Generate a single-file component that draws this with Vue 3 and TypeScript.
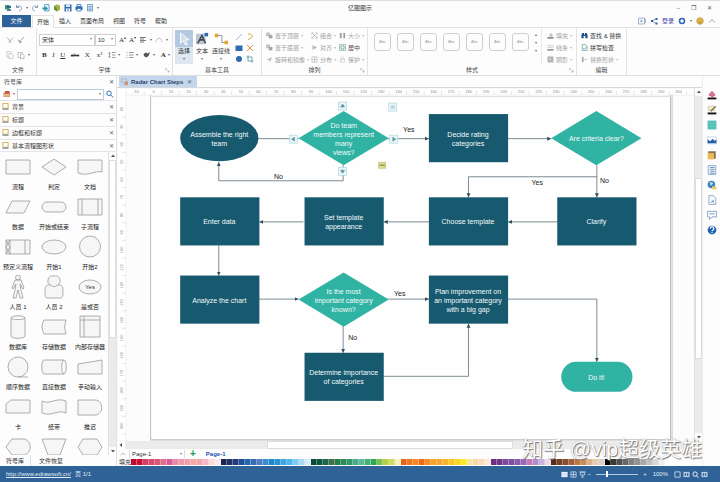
<script setup lang="ts">
import { h, ref } from 'vue'

type Part = [d: string, fill?: string, stroke?: string, width?: number]

const blue = '#2d6cb0'
const navy = '#1f4e86'
const grey = '#b4b4b4'
const white = '#fff'

const icons: Record<string, Part[]> = {
  logo: [['M2 2h9v9H2z', '#3f9b4f'], ['M5 4h9v4H5z', '#336699'], ['M6 10h8v4H6z', '#5b7ca8']],
  undo: [['M3 2v5h5M3 7c3-4 10-4 10 2 0 3-3 4-5 5', 'none', '#8296ae', 2]],
  redo: [['M13 2v5H8M13 7C10 3 3 3 3 9c0 3 3 4 5 5', 'none', '#8fa6b4', 2]],
  newdoc: [['M5 1h9v13H5z', '#e8f4fb', '#3a9bbd', 1.5], ['M1 7h6V4l5 5-5 5v-3H1z', '#2a97a6']],
  ball: [['M8 1l6 3v7l-6 4-6-4V4z', '#4f9a3a'], ['M8 1l6 3-6 4-6-4z', '#a2b94b'], ['M8 8l6-3v5l-6 4z', '#d5a43b']],
  save: [['M1 1h14v14H1z', blue], ['M4 1h8v5H4z', '#dceaf7'], ['M4 9h8v6H4z', '#fff'], ['M6 11h4v2H6z', blue]],
  print: [['M4 1h8v4H4z', '#fff', blue, 1.5], ['M1 5h14v7H1z', blue], ['M4 9h8v5H4z', '#fff', blue, 1.5]],
  preview: [['M3 1h10v13H3z', '#e5eef8', '#5686b6', 1.5], ['M5 5h6M5 8h6M5 11h6', 'none', '#5686b6', 1.5]],
  cut: [['M2 3l7 8M14 3L7 11M5 12h6', 'none', grey, 2]],
  brush: [['M14 2L8 9M3 8l6 4-3 2z', '#a6a6a6', '#a6a6a6', 2]],
  copy: [['M2 1h6l3 3v8H2z', '#fff', grey, 1.3], ['M6 5h5l3 3v7H6z', '#fff', grey, 1.3]],
  paste: [['M2 3h9v10H2z', '#fff', '#aaa', 1.3], ['M7 6h4l3 3v6H7z', '#fff', '#999', 1.3]],
  align: [['M2 3h12M2 6h8M2 9h12M2 12h8', 'none', '#555', 1.5]],
  arc: [['M2 12C3 2 13 2 14 12', 'none', grey, 1.5]],
  spacing: [['M3 3v10M1 5l2-2 2 2M1 11l2 2 2-2M8 3h7M8 8h7M8 13h7', 'none', '#777', 1.4]],
  bullets: [['M1 3h2M1 8h2M1 13h2M6 3h9M6 8h9M6 13h9', 'none', '#777', 1.5]],
  marker: [['M1 6l5-3 3 2 5-3-3 8-5 3-4-3z', '#555']],
  pointer: [['M4 1v12l3-3 3 5 2-1-3-5h5z', '#d5dde8', '#fff', 1]],
  text: [['M1 2h11v12H1z', '#bfc6cf'], ['M3 13L8 4l4 9M5 9h6', 'none', '#3f4c58', 1.8], ['M11 1h4v4h-4z', blue]],
  connector: [['M4 4h5v8h4', 'none', '#8aa4b4', 1.2], ['M1 2h4v4H1zM12 10h4v4h-4z', '#e6a02c']],
  line: [['M2 14L14 2', 'none', '#7aa6d6', 1.5]],
  curve: [['M4 2c8 0 10 3 8 6s-5 4-8 5', 'none', '#dba536', 2]],
  square: [['M1 3h14v11H1z', blue]],
  cross: [['M2 2l12 12M14 2L2 14', 'none', '#e79538', 2]],
  circle: [['M8 2a6 6 0 110 12A6 6 0 118 2', blue]],
  crop: [['M4 1v11h11M1 4h11v11', 'none', '#3f9490', 1.5]],
  layers: [['M1 2h7v7H1z', '#ccc', '#999', 1], ['M7 7h7v7H7z', '#aaa', '#999', 1]],
  rotate: [['M1 9L14 2 9 14 7 9z', '#bbb']],
  group: [['M2 2h4M2 2v4M14 2h-4M14 2v4M2 14h4M2 14v-4M14 14h-4M14 14v-4M4 4l8 8M11 5l-6 6', 'none', '#999', 1.4]],
  alignobj: [['M3 2v12M5 4l8 4-8 4z', '#bbb', '#aaa', 1]],
  grid: [['M2 2h12v12H2zM2 8h12M8 2v12', 'none', '#aaa', 1.3]],
  size: [['M2 2h4v12H2zM10 2h4v12h-4z', '#999']],
  center: [['M1 1h14v14H1z', '#eef7f5', '#6c9d98', 1.3], ['M8 4a4 4 0 110 8 4 4 0 010-8', 'none', '#3b7d76', 1.4]],
  lock: [['M3 8h10v6H3zM5 8V5c0-4 6-4 6 0v3', 'none', '#bbb', 1.3]],
  fill: [['M5 8l4-5 4 5-4 3z', '#ccc', '#999', 1], ['M1 12h14v3H1z', '#666']],
  stroke: [['M2 3h12v5H2zM4 9l7-6', 'none', '#bbb', 1.2], ['M1 12h14v3H1z', '#777']],
  shadow: [['M1 1h14v14H1z', '#bbb'], ['M3 3h8v8H3z', '#ccc', '#999', 1]],
  find: [['M1 14V7l2-5h4v4h2V2h4l2 5v7h-5V9H6v5z', navy]],
  spell: [['M3 1h7l4 4v10H3z', '#fff', '#3f8b91', 1.4], ['M5 9l3 3 6-6', 'none', '#3f8b91', 1.6]],
  swap: [['M2 2h4v12H2z', '#aaa'], ['M8 8h7', 'none', '#aaa', 1.5]],
  export: [['M1 2h12v12H1zM4 5l4 4M8 5v4H4M15 4v8', 'none', '#6d8fba', 1.3]],
  share: [['M4 8l8-4M4 8l8 5', 'none', '#3659a8', 1.2], ['M2 6h4v4H2zM11 2h4v4h-4zM11 11h4v4h-4z', '#3659a8']],
  gear: [['M8 3a5 5 0 110 10A5 5 0 118 3', 'none', '#2a63b8', 3]],
  smile: [['M8 1l5 2 2 5-2 5-5 2-5-2-2-5 2-5z', '#e6b54c', '#b78a2c', 1], ['M5 6h1M10 6h1M5 10c2 2 4 2 6 0', 'none', '#6a5527', 1.3]],
  up: [['M2 11l6-6 6 6', 'none', '#888', 1.6]],
  search: [['M6 2a4.500 4.500 0 110 9 4.500 4.500 0 010-9M9.500 10l5 5', 'none', '#3676b8', 2]],
  library: [['M1 5h5l1-2h7v11H1z', '#c98968'], ['M4 2h8v5H4z', '#cb4d43'], ['M2 8h11v5H2z', '#e2b88a']],
  book: [['M2 1h12v11H2z', '#fffdf5', '#d4a646', 2], ['M1 13h14v2H1z', '#41658d']],
  page: [['M1 2h10v6H1z', '#d5dbe2', '#8995a5', 1], ['M7 7h7v7H7z', '#ca9575']],
  rfill: [['M3 8l5-6 5 6-4 3z', '#e2748c', '#a64264', 1], ['M1 12h14v3H1z', '#111']],
  rline: [['M2 2h10v7H2z', '#eee9c4', '#bbb', 1], ['M14 2L6 10', 'none', '#7a7441', 2], ['M1 12h14v3H1z', '#111']],
  rtheme: [['M1 1h14v14H1z', '#4dbdb3'], ['M1 5h14M1 10h14M6 1v14M11 1v14', 'none', '#73d0c7', 1]],
  rimage: [['M1 3h14v11H1z', '#fff', '#aac1da', 1], ['M1 13V7l4 3 4-4 3 3 3-2v6z', '#2a5fa8']],
  rlayer: [['M2 2h12v12H2z', '#8a7250'], ['M1 5h10v10H1z', '#edbc58']],
  rlist: [['M2 1h12v14H2z', '#eef3f8', '#7b9bc0', 1.3], ['M5 4h7M5 7h7M5 10h7M5 13h7', 'none', '#5a83b0', 1.3]],
  rglobe: [['M7 1a6 6 0 110 12A6 6 0 117 1', '#3a84bd'], ['M4 4l4-1 2 3-4 3z', '#b7dce5'], ['M8 10h7v5H8z', '#e5ca79']],
  rdoc: [['M3 1h7l4 4v10H3z', '#f7fafc', '#829bb5', 1.3], ['M5 12l6-5v5z', '#7da2c8']],
  rchat: [['M1 2h14v9H8l-4 4v-4H1z', '#fff', '#6f94bb', 1.3], ['M4 6h2M7 6h2M10 6h2', 'none', '#456f9d', 1.8]],
  rhelp: [['M8 1a7 7 0 110 14A7 7 0 118 1', '#1d61ad'], ['M5 6c0-4 6-4 6 0 0 2-3 2-3 4M8 11v2', 'none', white, 1.8]],
  vnormal: [['M1 2h14v12H1z', '#f1f8ff'], ['M3 4h10v8H3z', '#d3e5f5']],
  vgrid: [['M2 2h12v12H2zM8 2v12M2 8h12', 'none', '#c9dcee', 1.8]],
  vshow: [['M1 2h14M3 3h10v6H3zM8 9v5M5 14h6', 'none', '#dbe8f4', 1.6]],
  vfit: [['M2 2h12v12H2z', 'none', '#dbe8f4', 1.8]],
  vfull: [['M1 2h14v12H1z', '#b7cde2'], ['M4 5h3v6H4zM9 5h3v6H9z', '#2f6297']],
  vzoom: [['M7 2a5 5 0 110 10A5 5 0 117 2M10 11l5 4', 'none', white, 2]],
  launcher: [['M2 7V2h5M6 6l7 7M13 8v5H8', 'none', '#888', 1.5]],
  arrowUp: [['M4 10l4-5 4 5z', '#555']],
  arrowDown: [['M4 6l4 5 4-5z', '#555']],
  arrowLeft: [['M10 4L5 8l5 4z', '#555']],
}

const Icon = (props: { name: string }) =>
  h('svg', { viewBox: '0 0 16 16', 'aria-hidden': 'true', class: 'icon' },
    (icons[props.name] ?? []).map(([d, fill, stroke, width]) =>
      h('path', { d, fill: fill ?? 'none', stroke, 'stroke-width': width })))
Icon.props = ['name']

const quick = ['logo', 'undo', 'redo', 'newdoc', 'ball', 'save', 'print', 'preview']
const tabs = ['开始', '插入', '页面布局', '视图', '符号', '帮助']
const arrange = [
  ['layers', '置于顶层', true], ['group', '组合', true], ['size', '大小', true],
  ['layers', '置于底层', true], ['alignobj', '对齐', true], ['center', '居中', false],
  ['rotate', '旋转和镜像', true], ['grid', '分布', true], ['lock', '保护', true],
] as [string, string, boolean][]
const paint = [['fill', '填充'], ['stroke', '线条'], ['shadow', '阴影']]
const categories = ['背景', '标题', '边框和标题', '基本流程图形状']

const shapes: { label: string; d: string; text?: string }[] = [
  { label: '流程', d: 'M3 5h24v14H3z' },
  { label: '判定', d: 'M15 4l12 8-12 8-12-8z' },
  { label: '文档', d: 'M3 5h24v12c-8-2-13 5-24 1z' },
  { label: '数据', d: 'M9 6h18l-6 12H3z' },
  { label: '开始或结束', d: 'M8 7h14a5 5 0 010 10H8A5 5 0 018 7z' },
  { label: '子流程', d: 'M3 4h24v16H3zM7 4v16M23 4v16' },
  { label: '预定义流程', d: 'M3 5h24v14H3zM7 5v14M22 5v14M3 5l4 7-4 7M7 5l-4 7 4 7' },
  { label: '开始1', d: 'M15 5a12 7 0 010 14 12 7 0 010-14z' },
  { label: '开始2', d: 'M15 1a10 10 0 010 21 10 10 0 010-21z' },
  { label: '人员 1', d: 'M15 0a2.500 2.500 0 010 5 2.500 2.500 0 010-5zM12 5h6l3 8-1 1-3-5 1 6 2 8h-3l-2-8-2 8h-3l2-8 1-6-3 5-1-1z' },
  { label: '人员 2', d: 'M15 1a5 5 0 014 9c5-1 5 3 5 7 0 5-1 6-3 6H9c-3 0-3-2-3-6 0-4 0-8 5-7a5 5 0 014-9zM11 10c3 2 5 2 8 0' },
  { label: '是或否', d: 'M15 5a11 7 0 010 14 11 7 0 010-14z', text: 'Yes' },
  { label: '数据库', d: 'M8 3c0-3 14-3 14 0v18c0 3-14 3-14 0zM8 3c0 2 14 2 14 0' },
  { label: '存储数据', d: 'M5 5h22q-3 7 0 14H5q-4-7 0-14z' },
  { label: '内部存储器', d: 'M5 1h20v21H5zM9 1v21M5 5h20' },
  { label: '顺序数据', d: 'M15 22a10 10 0 010-20 10 10 0 010 20h10' },
  { label: '直接数据', d: 'M5 5h20c3 0 3 14 0 14H5C2 19 2 5 5 5zM25 5c-3 0-3 14 0 14' },
  { label: '手动输入', d: 'M3 9l24-4v14H3z' },
  { label: '卡', d: 'M8 5h19v13H3v-9z' },
  { label: '纸带', d: 'M3 6c8 4 14-4 24 0v12c-8-4-14 4-24 0z' },
  { label: '推迟', d: 'M3 5h17c9 0 9 15 0 15H3z' },
  { label: '', d: 'M9 4h13c7 3 7 13 0 16H9l-6-8z' },
  { label: '', d: 'M3 4h24l-6 16H9z' },
  { label: '', d: 'M8 4h14l5 8-5 8H8l-5-8z' },
]

const hMarks = Array.from({ length: 32 }, (_, i) => ({ value: i * 10 - 10, x: 137 + i * 17.45 }))
const vMarks = Array.from({ length: 19 }, (_, i) => ({ value: i * 10 + 20, y: 109 + i * 17.55 }))

interface Node { kind: 'rect' | 'ellipse' | 'diamond' | 'pill'; x: number; y: number; lines: string[] }
const nodes: Node[] = [
  { kind: 'ellipse', x: 220, y: 138, lines: ['Assemble the right', 'team'] },
  { kind: 'diamond', x: 344, y: 138, lines: ['Do team', 'members represent', 'many', 'views?'] },
  { kind: 'rect', x: 468, y: 138, lines: ['Decide rating', 'categories'] },
  { kind: 'diamond', x: 596, y: 138, lines: ['Are criteria clear?'] },
  { kind: 'rect', x: 220, y: 221, lines: ['Enter data'] },
  { kind: 'rect', x: 344, y: 221, lines: ['Set template', 'appearance'] },
  { kind: 'rect', x: 468, y: 221, lines: ['Choose template'] },
  { kind: 'rect', x: 596, y: 221, lines: ['Clarify'] },
  { kind: 'rect', x: 220, y: 299, lines: ['Analyze the chart'] },
  { kind: 'diamond', x: 344, y: 299, lines: ['Is the most', 'important category', 'known?'] },
  { kind: 'rect', x: 468, y: 299, lines: ['Plan improvement on', 'an important category', 'with a big gap'] },
  { kind: 'rect', x: 344, y: 376, lines: ['Determine importance', 'of categories'] },
  { kind: 'pill', x: 596, y: 376, lines: ['Do it!'] },
]
const links = [
  'M258 138.500H299', 'M388 138.500H429', 'M508 138.500H551', 'M343.500 165V180.500H219.500V162',
  'M596.500 165V197', 'M596.500 176.500H468.500V197', 'M557 221.500H508', 'M429 221.500H384',
  'M304 221.500H260', 'M219.500 245V275', 'M259 298.500H299', 'M388 298.500H429', 'M343.500 325V352',
  'M383 375.500H468.500V323', 'M508 298.500H596.500V361',
]
const linkLabels = [
  { t: 'Yes', x: 409, y: 132 }, { t: 'No', x: 279, y: 179 }, { t: 'Yes', x: 537, y: 185 },
  { t: 'No', x: 604, y: 183 }, { t: 'Yes', x: 400, y: 295 }, { t: 'No', x: 353, y: 339 },
]
const handles = [
  { x: 343, y: 106, d: 'M-2 1L0-2 2 1z' }, { x: 294, y: 139, d: 'M1-2L-2 0 1 2z' },
  { x: 394, y: 139, d: 'M-1-2L2 0-1 2z' }, { x: 343, y: 171, d: 'M-2-1L0 2 2-1z' },
  { x: 393, y: 107, d: 'M-2-1h4M-2 1h4' },
]

const sideTools = ['rfill', 'rline', 'rtheme', 'rimage', 'rlayer', 'rlist', 'rglobe', 'rdoc', 'rchat', 'rhelp']

const palette = `c00a2c c8102e d4406c d84a6e d85878 e0708c d85a9c e88aa4 f09aac f0a0a8 f4a8a0 f4a4b0 f6b8c4 fadada fce8ec
1c2450 203468 243c7c 1f4f94 2468b0 3a6cb4 5080c0 3c8cd0 1e88c8 2a94d8 40a4e0 50b8ec 80ccf0 a8dcf6 d6eefa
0c4c34 0c5840 1c6848 3f7048 20804c 2c8c54 30986c 48ac88 5cb898 48b070 2ca858 7cc048 b4d048 d0dc60 f0f0c0
e8641c f07820 f48a20 f06818 f49020 f8a028 f4a830 f8b428 fcc820 fcd820 fcec20 f6e8a0 f4d8a8 f8dcc0 fbeadc
6c2c80 703884 8048a0 7c50a0 8c5cac 9c68b4 c878b4 b090cc d0b0dc f0d8e8
582c1c 784024 885030 a46038 bc7840 c88c58 d8b494 e8cdb4 d8d0c4
000000 3a3a3a 505050 686868 808080 949494 a8a8a8 c0c0c0 d8d8d8 eeeeee`
  .split(/\s+/).map(c => '#' + c)

const font = ref('宋体')
const fontSize = ref('10')
const query = ref('')
const zoom = ref(25)
const page = ref('Page-1')
</script>

<template>
  <div class="app">
    <header class="titlebar">
      <div class="quick">
        <template v-for="q in quick" :key="q">
          <button type="button" :aria-label="q"><Icon :name="q" /></button>
          <span v-if="q === 'undo'" class="caret">▾</span>
        </template>
        <span class="caret">▾</span>
      </div>
      <h1>亿图图示</h1>
      <div class="window">
        <button type="button" aria-label="minimize">–</button>
        <button type="button" aria-label="maximize">❐</button>
        <button type="button" aria-label="close">✕</button>
      </div>
    </header>

    <nav class="tabs">
      <button type="button" class="file">文件</button>
      <button v-for="(t, i) in tabs" :key="t" type="button" :class="{ current: i === 0 }">{{ t }}</button>
      <div class="account">
        <Icon name="export" /><Icon name="share" /><a href="#login">登录</a>
        <Icon name="gear" /><span class="caret">▾</span><Icon name="smile" /><Icon name="up" />
      </div>
    </nav>

    <section class="ribbon">
      <div class="group g-file">
        <div class="rows">
          <div class="row"><Icon name="cut" /><Icon name="brush" /></div>
          <div class="row"><Icon name="copy" /><Icon name="paste" /><span class="caret">▾</span></div>
        </div>
        <footer>文件</footer>
      </div>

      <div class="group g-font">
        <div class="rows">
          <div class="row">
            <label class="pick family"><select v-model="font" aria-label="字体"><option>宋体</option></select></label>
            <label class="pick size"><select v-model="fontSize" aria-label="字号"><option>10</option></select></label>
            <button type="button" class="glyph">A<sup>▴</sup></button>
            <button type="button" class="glyph">A<sup>▾</sup></button>
            <Icon name="align" /><span class="caret">▾</span><Icon name="arc" /><span class="caret">▾</span>
          </div>
          <div class="row spread">
            <button type="button" class="glyph"><b>B</b></button>
            <button type="button" class="glyph"><i>I</i></button>
            <button type="button" class="glyph"><u>U</u></button>
            <button type="button" class="glyph struck"><s>abc</s></button>
            <button type="button" class="glyph">X<sub>₂</sub></button>
            <button type="button" class="glyph">x²</button>
            <span class="pair"><Icon name="spacing" /><span class="caret">▾</span></span>
            <span class="pair"><Icon name="bullets" /><span class="caret">▾</span></span>
            <span class="pair"><Icon name="marker" /><span class="caret">▾</span></span>
            <span class="pair"><button type="button" class="glyph"><b>A</b></button><span class="caret">▾</span></span>
          </div>
        </div>
        <footer>字体<Icon name="launcher" class="launcher" /></footer>
      </div>

      <div class="group g-tools">
        <div class="tools">
          <button type="button" class="tool active"><Icon name="pointer" />选择<span class="caret">▾</span></button>
          <button type="button" class="tool"><Icon name="text" />文本<span class="caret">▾</span></button>
          <button type="button" class="tool"><Icon name="connector" />连接线<span class="caret">▾</span></button>
          <div class="mini">
            <Icon name="line" /><Icon name="curve" /><Icon name="square" />
            <Icon name="cross" /><Icon name="circle" /><Icon name="crop" />
          </div>
        </div>
        <footer>基本工具</footer>
      </div>

      <div class="group g-arrange">
        <div class="arrange">
          <button v-for="[icon, label, off] in arrange" :key="label" type="button" class="cmd" :class="{ off }">
            <Icon :name="icon" />{{ label }}<span v-if="off" class="caret">▾</span>
          </button>
        </div>
        <footer>排列<Icon name="launcher" class="launcher" /></footer>
      </div>

      <div class="group g-style">
        <div class="style">
          <button v-for="n in 7" :key="n" type="button" class="preset">Abc</button>
          <div class="scroll"><span>▴</span><span>▾</span><span>▾</span></div>
          <div class="stack">
            <button v-for="[icon, label] in paint" :key="label" type="button" class="cmd off">
              <Icon :name="icon" />{{ label }}<span class="caret">▾</span>
            </button>
          </div>
        </div>
        <footer>样式<Icon name="launcher" class="launcher" /></footer>
      </div>

      <div class="group g-edit">
        <div class="stack">
          <button type="button" class="cmd strong"><Icon name="find" />查找 &amp; 替换</button>
          <button type="button" class="cmd strong"><Icon name="spell" />拼写检查</button>
          <button type="button" class="cmd off"><Icon name="swap" />替换形状<span class="caret">▾</span></button>
        </div>
        <footer>编辑</footer>
      </div>
    </section>

    <main>
      <aside class="library">
        <div class="head"><h2>符号库</h2><button type="button" aria-label="close">✕</button></div>
        <div class="search">
          <Icon name="library" /><span class="caret red">▾</span>
          <label class="pick field"><input v-model="query" type="text" aria-label="搜索符号" /></label>
          <Icon name="search" />
        </div>
        <div v-for="c in categories" :key="c" class="category">
          <Icon name="book" /><span>{{ c }}</span><button type="button" :aria-label="'close ' + c">✕</button>
        </div>
        <div class="shelf">
          <div class="shapes">
            <div v-for="(s, i) in shapes" :key="i" class="shape">
              <svg viewBox="0 0 30 24" aria-hidden="true">
                <path :d="s.d" />
                <text v-if="s.text" x="15" y="14">{{ s.text }}</text>
              </svg>
              <span>{{ s.label }}</span>
            </div>
          </div>
          <div class="vbar">
            <Icon name="arrowUp" /><span class="thumb"></span><span class="track"></span><Icon name="arrowDown" />
          </div>
        </div>
        <div class="foot"><button type="button" class="on">符号库</button><button type="button">文件恢复</button></div>
      </aside>

      <section class="work">
        <div class="docs">
          <button type="button" class="doc"><Icon name="page" />Radar Chart Steps<span>✕</span></button>
        </div>
        <div class="stage">
          <svg class="board" viewBox="118 88 576 352" preserveAspectRatio="xMinYMin slice">
            <defs>
              <marker id="arrow" viewBox="0 0 4 4" refX="4" refY="2" markerWidth="5" markerHeight="5" orient="auto">
                <path d="M0 0l4 2-4 2z" fill="#31505f" />
              </marker>
            </defs>
            <path class="sheet" d="M151.500 95V438.500H670V95" />
            <path class="shade" d="M151 439.500H671.500V95" />
            <path class="pageline" d="M151 96.500H670" />
            <rect class="rule" x="118" y="88" width="576" height="7" />
            <rect class="rule" x="118" y="88" width="9" height="352" />
            <g class="marks">
              <g v-for="m in hMarks" :key="'h' + m.value">
                <text :x="m.x" y="93">{{ m.value }}</text>
                <path :d="`M${m.x + 8} 91v4`" />
              </g>
              <g v-for="m in vMarks" :key="'v' + m.value">
                <text :transform="`translate(124 ${m.y}) rotate(-90)`">{{ m.value }}</text>
                <path :d="`M123 ${m.y + 8}h4`" />
              </g>
            </g>
            <path v-for="l in links" :key="l" :d="l" class="link" marker-end="url(#arrow)" />
            <text v-for="(l, i) in linkLabels" :key="i" class="link-label" :x="l.x" :y="l.y">{{ l.t }}</text>
            <g v-for="n in nodes" :key="n.lines[0]" :transform="`translate(${n.x} ${n.y})`">
              <rect v-if="n.kind === 'rect'" class="deep" x="-39" y="-24" width="79" height="48" />
              <ellipse v-else-if="n.kind === 'ellipse'" class="deep" rx="39" ry="23" />
              <path v-else-if="n.kind === 'diamond'" class="teal" d="M0-27L45 0 0 27-45 0z" />
              <rect v-else class="teal" x="-35" y="-15" width="71" height="30" rx="15" />
              <text v-for="(line, i) in n.lines" :key="line" class="node-text" x="0" :y="3 + i * 9 - (n.lines.length - 1) * 4.5">{{ line }}</text>
            </g>
            <g v-for="(k, i) in handles" :key="i" :transform="`translate(${k.x} ${k.y})`" class="handle">
              <rect x="-4" y="-4" width="8" height="8" /><path :d="k.d" />
            </g>
            <g transform="translate(383 165)" class="note"><rect x="-4" y="-3" width="7" height="6" /><path d="M-3 0h5" /></g>
          </svg>
          <div class="vbar wide">
            <Icon name="arrowUp" /><span class="track before"></span><span class="thumb"></span>
            <span class="track after"></span><Icon name="arrowDown" />
          </div>
        </div>
        <div class="hbar">
          <Icon name="arrowLeft" /><span class="track"></span><span class="thumb"></span><span class="track end"></span>
        </div>
        <div class="pages">
          <Icon name="up" />
          <label class="pick"><select v-model="page" aria-label="页"><option>Page-1</option></select></label>
          <button type="button" class="add" aria-label="add page">+</button>
          <button type="button" class="page">Page-1</button>
        </div>
        <div class="palette">
          <span>填充</span>
          <button v-for="(c, i) in palette" :key="i" type="button" :aria-label="c" :style="{ backgroundColor: c }"></button>
        </div>
      </section>

      <aside class="side">
        <button v-for="s in sideTools" :key="s" type="button" :aria-label="s"><Icon :name="s" /></button>
      </aside>
      <div class="watermark">知乎 @vip超级英雄</div>
    </main>

    <footer class="status">
      <a href="http://www.edrawsoft.cn/">http://www.edrawsoft.cn/</a><span>页 1/1</span>
      <div class="views">
        <Icon name="vnormal" /><Icon name="vgrid" /><Icon name="vshow" /><span>−</span>
        <input v-model="zoom" type="range" min="0" max="100" aria-label="缩放" />
        <span>+</span><span class="percent">100%</span>
        <Icon name="vfit" /><Icon name="vfull" /><Icon name="vzoom" /><Icon name="vfull" />
      </div>
    </footer>
  </div>
</template>

<style>
body { margin: 0; background: #fff; }
</style>

<style scoped>
.app {
  height: 100vh;
  display: flex;
  flex-direction: column;
  font: 6px/8px "Liberation Sans", "Noto Sans CJK SC", sans-serif;
  color: #333;
  overflow: hidden;
  background: #fdfdfd;
  border-top: 1px solid #ddd;
  box-sizing: border-box;
}
button, select, input {
  font: inherit;
  color: inherit;
  border: 0;
  padding: 0;
  margin: 0;
  background: none;
}
button { white-space: nowrap; }
h1, h2 { font: inherit; margin: 0; }
a { color: inherit; }
.icon { width: 8px; height: 8px; display: block; flex: none; }
.caret { font-size: 4px; color: #666; }

.titlebar { height: 14px; flex: none; display: grid; grid-template-columns: 1fr auto 1fr; align-items: center; }
.titlebar h1 { color: #333; }
.quick { display: flex; align-items: center; gap: 3px; padding-left: 4px; }
.window { display: flex; justify-content: flex-end; gap: 11px; padding-right: 8px; color: #555; }

.tabs { height: 12px; flex: none; display: flex; align-items: stretch; padding-left: 2px; border-bottom: 1px solid #e2e2e2; }
.tabs > button { padding: 0 5px; }
.tabs > button:not(.file) { padding: 0 4px; margin-right: 1px; }
.tabs > .file { width: 29px; background: #2d6298; color: #fff; margin-right: 1px; }
.tabs > .current { border: 1px solid #e2e2e2; border-bottom: 0; background: #fff; margin-bottom: -1px; }
.account { margin-left: auto; display: flex; align-items: center; gap: 4px; padding-right: 4px; }
.account a { color: #4437ae; text-decoration: none; }

.ribbon { height: 47px; flex: none; display: flex; border-bottom: 1px solid #dedede; }
.group { display: flex; flex-direction: column; border-right: 1px solid #e2e2e2; box-sizing: border-box; flex: none; }
.group > footer { height: 9px; margin-top: auto; text-align: center; position: relative; color: #444; }
.launcher { position: absolute; right: 2px; top: 2px; width: 5px; height: 5px; }
.g-file { width: 37px; }
.g-font { width: 136px; }
.g-tools { width: 89px; }
.g-arrange { width: 106px; }
.g-style { width: 209px; }
.g-edit { width: 50px; }
.rows { display: flex; flex-direction: column; padding: 6px 2px 0 2px; gap: 4px; }
.row { height: 11px; display: flex; align-items: center; gap: 3px; }
.g-file .rows { padding-left: 6px; }
.row.spread { justify-content: space-between; padding-left: 3px; }
.pair { display: flex; align-items: center; gap: 2px; }
.glyph { font: 7px/8px "Liberation Serif", serif; color: #333; }
.struck { font-size: 6px; }
.glyph sup, .glyph sub { font-size: 4px; line-height: 1px; }
.pick { position: relative; display: flex; border: 1px solid #d0d0d0; background: #fff; box-sizing: border-box; }
.pick::after { content: "▾"; position: absolute; right: 2px; top: 0; font-size: 4px; color: #777; pointer-events: none; }
.pick select, .pick input { width: 100%; appearance: none; padding-left: 2px; outline: 0; min-width: 0; }
.family { width: 56px; height: 12px; }
.size { width: 21px; height: 12px; margin-left: -3px; }

.tools { display: flex; padding: 2px 0 0 2px; height: 36px; box-sizing: border-box; }
.tool { width: 18px; display: flex; flex-direction: column; align-items: center; gap: 1px; padding-top: 2px; line-height: 8px; }
.tool:nth-child(3) { width: 20px; }
.tool .icon { width: 14px; height: 14px; }
.tool .caret { line-height: 6px; }
.tool.active { background: linear-gradient(#b3c9df 50%, #dce7f2 50%); }
.mini { display: grid; grid-template-columns: 8px 8px; gap: 3px; padding: 3px 0 0 4px; align-content: start; }

.arrange { display: grid; grid-template-columns: 45px 28px 25px; grid-auto-rows: 9px; row-gap: 3px; padding: 3px 0 0 4px; }
.cmd { display: flex; align-items: center; gap: 2px; text-align: left; color: #555; }
.cmd .icon { width: 7px; height: 7px; }
.cmd.off { color: #a0a0a0; }
.cmd.off .caret { color: #bbb; }
.cmd.strong { color: #333; }
.stack { display: flex; flex-direction: column; gap: 3px; padding: 3px 0 0 4px; }
.stack .cmd { height: 9px; }
.style { display: flex; padding-left: 6px; gap: 6px; }
.preset { width: 17px; height: 18px; margin-top: 5px; border: 1px solid #cfcfcf; border-radius: 3px; color: #999; font-size: 4px; flex: none; }
.scroll { display: flex; flex-direction: column; font-size: 4px; padding-top: 3px; color: #666; }
.style .stack { border-left: 1px solid #e8e8e8; padding-left: 5px; margin-left: -2px; }

main { flex: 1; min-height: 0; display: flex; position: relative; }
.library { width: 117px; flex: none; display: flex; flex-direction: column; border-right: 1px solid #e3e3e3; box-sizing: border-box; }
.head { height: 12px; flex: none; display: flex; justify-content: space-between; align-items: center; padding: 0 2px 0 4px; color: #555; }
.search { height: 12px; flex: none; display: flex; align-items: center; gap: 2px; padding: 0 2px 0 3px; }
.red { color: #d05a50; }
.field { flex: 1; height: 11px; border-color: #bccbdc; }
.category { height: 12px; flex: none; display: flex; align-items: center; gap: 3px; padding: 0 2px; border-top: 1px solid #e4e4e4; box-sizing: border-box; color: #333; }
.category .icon { width: 7px; height: 7px; }
.category button { margin-left: auto; color: #666; }
.category + .category { margin-top: 1px; }
.shelf { flex: 1; min-height: 0; display: flex; border-top: 1px solid #e4e4e4; }
.shapes { flex: 1; display: grid; grid-template-columns: repeat(3, 1fr); grid-auto-rows: 40px; overflow: hidden; }
.shape { display: flex; flex-direction: column; align-items: center; gap: 4px; padding-top: 3px; white-space: nowrap; color: #222; }
.shape svg { width: 30px; height: 24px; flex: none; }
.shape path { fill: #f6f6f6; stroke: #999; stroke-width: 0.8; }
.shape text { font-size: 6px; text-anchor: middle; fill: #333; }
.vbar { width: 8px; flex: none; display: flex; flex-direction: column; border-left: 1px solid #e0e0e0; box-sizing: border-box; }
.thumb { background: #fff; border: 1px solid #dcdcdc; flex: 178; box-sizing: border-box; }
.track { background: #ebebeb; flex: 110; }
.before { flex: 82; }
.wide .thumb { flex: 181; }
.after { flex: 74; }
.foot { height: 11px; flex: none; display: flex; gap: 2px; }
.foot button { padding: 0 6px; }
.foot .on { border-right: 1px solid #ddd; }

.work { flex: 1; min-width: 0; display: flex; flex-direction: column; }
.docs { height: 12px; flex: none; display: flex; padding-left: 2px; border-bottom: 1px solid #d8d8d8; box-sizing: border-box; }
.doc { display: flex; align-items: center; gap: 2px; padding: 0 5px 0 2px; background: #c2d6ed; color: #303e63; font-weight: bold; }
.doc span { font-weight: normal; color: #666; margin-left: 2px; }
.stage { flex: 1; min-height: 0; display: flex; }
.board { flex: 1; min-width: 0; height: 100%; background: #fcfcfc; }
.sheet { fill: #fefefe; stroke: #bdbdbd; stroke-width: 1; }
.shade { fill: none; stroke: #dedede; stroke-width: 2; }
.pageline { stroke: #e0e0e0; }
.rule { fill: #fff; stroke: #e2e2e2; stroke-width: 0.5; }
.marks text { font-size: 4px; fill: #888; text-anchor: middle; }
.marks path { stroke: #ccc; stroke-width: 0.5; }
.link { fill: none; stroke: #5c7179; stroke-width: 0.8; }
.link-label { font-size: 7px; fill: #222; text-anchor: middle; }
.deep { fill: #17596f; }
.teal { fill: #31b3a4; }
.node-text { font-size: 7px; fill: #f3fafa; text-anchor: middle; }
.handle rect { fill: #eaf6f8; stroke: #a5d0d5; stroke-width: 0.6; }
.handle path { fill: #5a98a4; stroke: #5a98a4; stroke-width: 0.6; }
.note rect { fill: #dfdc91; stroke: #b9b66c; stroke-width: 0.6; }
.note path { stroke: #7d7b3e; stroke-width: 1; }
.hbar { height: 8px; flex: none; display: flex; margin-right: 8px; }
.hbar .track { flex: 142; }
.hbar .thumb { flex: 245; }
.hbar .end { flex: 181; }
.pages { height: 10px; flex: none; display: flex; align-items: center; gap: 5px; padding-left: 3px; }
.pages .icon { width: 6px; height: 6px; }
.pages .pick { width: 56px; border: 0; border-left: 1px solid #ddd; border-right: 1px solid #ddd; margin-left: -2px; }
.add { color: #18a04a; font-weight: bold; font-size: 10px; }
.page { color: #2b52b8; font-weight: bold; padding: 0 5px; }
.palette { height: 7px; flex: none; display: flex; }
.palette span { width: 14px; line-height: 7px; text-align: right; }
.palette button { width: 6px; height: 6px; border-right: 1px solid rgba(255, 255, 255, 0.35); border-radius: 0; flex: none; }
.side { width: 18px; flex: none; display: flex; flex-direction: column; align-items: center; gap: 5px; padding-top: 14px; box-sizing: border-box; border-left: 1px solid #eee; }
.side .icon { width: 10px; height: 10px; }
.watermark {
  position: absolute;
  right: 18px;
  bottom: 4px;
  font-size: 21px;
  line-height: 26px;
  color: #fff;
  text-shadow: 1px 1px 1px #777, 0 0 1px #999;
  pointer-events: none;
}

.status { height: 16px; flex: none; display: flex; align-items: center; gap: 4px; padding: 0 6px; background: #2f6297; color: #e5eef6; }
.views { margin-left: auto; display: flex; align-items: center; gap: 2px; padding-right: 6px; }
.views .icon { width: 7px; height: 7px; }
.views input { appearance: none; width: 42px; height: 8px; margin: 0 3px; background: linear-gradient(#b5cbe0, #b5cbe0) center / 100% 1px no-repeat; }
.views input::-webkit-slider-thumb { appearance: none; width: 2px; height: 6px; background: #fff; }
.percent { margin: 0 4px; }
</style>
